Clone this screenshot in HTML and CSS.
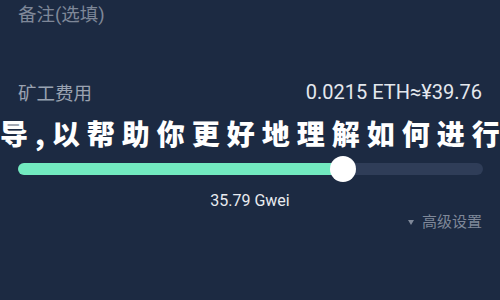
FILE: index.html
```html
<!DOCTYPE html>
<html lang="zh-CN">
<head>
<meta charset="utf-8">
<link rel="stylesheet" href="styles.css">
</head>
<body>
<div class="page">
  <div class="remark-label">备注(选填)</div>
  <div class="fee-row">
    <span class="fee-label">矿工费用</span>
    <span class="fee-value">0.0215 ETH≈¥39.76</span>
  </div>
  <div class="watermark">导,以帮助你更好地理解如何进行</div>
  <div class="slider">
    <div class="track">
      <div class="fill" style="width: 69.9%"></div>
    </div>
    <div class="knob" style="left: 69.9%"></div>
  </div>
  <div class="gwei">35.79 Gwei</div>
  <div class="advanced"><span class="caret"></span>高级设置</div>
</div>
</body>
</html>
```

FILE: styles.css
```css
html, body {
  margin: 0;
  padding: 0;
  background: #1c2a42;
}
body {
  width: 500px;
  height: 300px;
  overflow: hidden;
  font-family: Roboto, "Noto Sans CJK SC", sans-serif;
}
.page {
  padding: 4px 18px 0 18px;
  display: flex;
  flex-direction: column;
}
.remark-label {
  font-size: 18.5px;
  line-height: 22px;
  color: #7e8798;
}
.fee-row {
  margin-top: 55px;
  display: flex;
  justify-content: space-between;
  align-items: center;
  height: 22px;
}
.fee-label {
  font-size: 18.5px;
  color: #9aa2b1;
}
.fee-value {
  font-size: 20px;
  color: #e4e8ee;
}
.watermark {
  margin: 15px -18px 0 -18px;
  font-family: "Noto Sans CJK SC", sans-serif;
  font-weight: 900;
  font-size: 28px;
  line-height: 30px;
  letter-spacing: 7px;
  white-space: nowrap;
  color: #ffffff;
}
.slider {
  position: relative;
  margin-top: 8px;
  height: 26px;
  margin-right: -1px;
  display: flex;
  align-items: center;
}
.track {
  flex: 1;
  height: 12px;
  border-radius: 6px;
  background: #2f3d58;
  overflow: hidden;
}
.fill {
  height: 100%;
  background: #72eac0;
}
.knob {
  position: absolute;
  top: 0;
  width: 26px;
  height: 26px;
  margin-left: -13px;
  border-radius: 50%;
  background: #ffffff;
}
.gwei {
  margin-top: 9px;
  text-align: center;
  font-size: 16px;
  line-height: 20px;
  color: #e8ebf0;
}
.advanced {
  margin-top: 1px;
  align-self: flex-end;
  display: flex;
  align-items: center;
  font-size: 15px;
  line-height: 20px;
  color: #7f8899;
}
.caret {
  width: 0;
  height: 0;
  border-left: 3px solid transparent;
  border-right: 3px solid transparent;
  border-top: 5px solid #7f8899;
  margin-right: 8px;
}
```
